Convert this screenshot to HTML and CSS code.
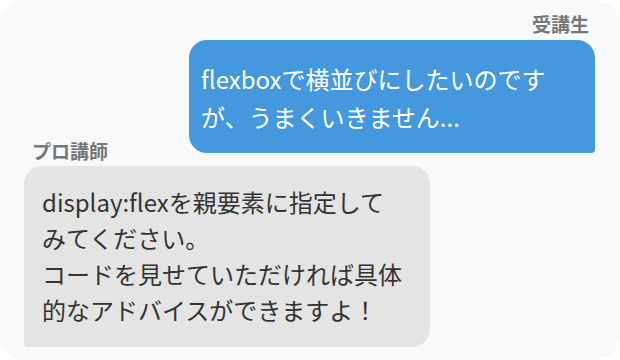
FILE: index.html
```html
<!DOCTYPE html>
<html lang="ja">
<head>
    <meta charset="UTF-8">
    <meta name="viewport" content="width=device-width, initial-scale=1.0">
    <title>チャット</title>
    <link rel="stylesheet" href="styles.css">
</head>
<body>
    <div class="chat">
        <div class="message student">
            <div class="name">受講生</div>
            <div class="bubble">flexboxで横並びにしたいのです<br>が、うまくいきません...</div>
        </div>
        <div class="message teacher">
            <div class="name">プロ講師</div>
            <div class="bubble">display:flexを親要素に指定して<br>みてください。<br>コードを見せていただければ具体<br>的なアドバイスができますよ！</div>
        </div>
    </div>
</body>
</html>
```

FILE: styles.css
```css
body {
    margin: 0;
    padding: 0;
    background: #ffffff;
    font-family: "Noto Sans CJK JP", "Noto Sans", sans-serif;
}

.chat {
    width: 620px;
    height: 360px;
    box-sizing: border-box;
    padding: 12px 25px 13px 24px;
    background: #f8f9fa;
    border-radius: 24px;
    display: flex;
    flex-direction: column;
}

.message {
    display: flex;
    flex-direction: column;
}

.student {
    align-items: flex-end;
}

.teacher {
    align-items: flex-start;
    margin-top: -14px;
}

.name {
    font-size: 19px;
    font-weight: bold;
    line-height: 24px;
    color: #777777;
    margin-bottom: 4px;
}

.student .name {
    margin-right: 6px;
}

.teacher .name {
    margin-left: 8px;
    margin-bottom: 3px;
}

.bubble {
    width: 406px;
    box-sizing: border-box;
    font-size: 24px;
    line-height: 36px;
    white-space: nowrap;
}

.student .bubble {
    background: #4598dd;
    color: #ffffff;
    line-height: 38px;
    padding: 20px 12px 17px;
    border-radius: 18px 18px 4px 18px;
}

.teacher .bubble {
    background: #e4e4e4;
    color: #333333;
    padding: 18px 18px 19px;
    border-radius: 18px 18px 18px 4px;
}
```
